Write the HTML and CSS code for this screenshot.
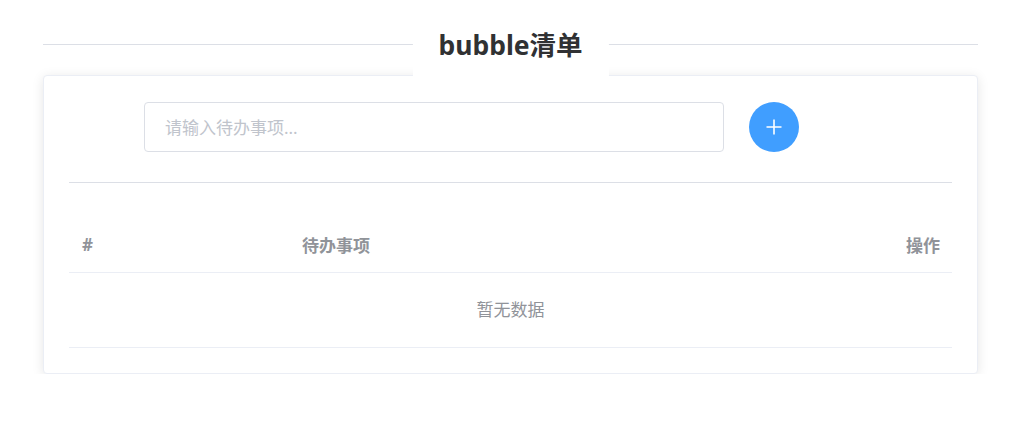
FILE: index.html
```
<!DOCTYPE html>
<html lang="zh-CN">
<head>
  <meta charset="UTF-8" />
  <meta name="viewport" content="width=device-width, initial-scale=1.0" />
  <title>bubble清单</title>
  <link rel="stylesheet" href="styles.css">
</head>
<body>
  <div class="page">
    <div class="header">
      <h1 class="title">bubble清单</h1>
    </div>

    <div class="card">
      <div class="add-row">
        <input type="text" class="todo-input" placeholder="请输入待办事项..." />
        <button class="add-btn" aria-label="add">
          <svg width="18" height="18" viewBox="0 0 18 18">
            <path d="M9 1.5v15M1.5 9h15" stroke="#fff" stroke-width="1.6" fill="none" />
          </svg>
        </button>
      </div>

      <div class="divider"></div>

      <div class="table">
        <div class="thead">
          <div class="cell">#</div>
          <div class="cell">待办事项</div>
          <div class="cell right">操作</div>
        </div>
        <div class="empty">暂无数据</div>
      </div>
    </div>
  </div>
</body>
</html>
```

FILE: styles.css
```
* {
  box-sizing: border-box;
}
body {
  margin: 0;
  background-color: #fff;
  font-family: "Noto Sans", "Noto Sans CJK SC", sans-serif;
  color: #303133;
}
.page {
  width: 935px;
  margin: 0 44px 0 43px;
  padding-top: 17px;
}
.header {
  position: relative;
  height: 58px;
  z-index: 1;
}
.header::before {
  content: "";
  position: absolute;
  left: 0;
  right: 0;
  top: 27px;
  border-top: 1px solid #dcdfe6;
}
.title {
  position: absolute;
  top: 0;
  left: 50%;
  transform: translateX(-50%);
  margin: 0;
  height: 62px;
  line-height: 56px;
  padding: 0 26px;
  background-color: #fff;
  font-size: 26.5px;
  font-weight: bold;
  color: #303133;
  white-space: nowrap;
}
.card {
  border: 1px solid #ebeef5;
  border-radius: 4px;
  background-color: #fff;
  box-shadow: 0 2px 12px 0 rgba(0, 0, 0, 0.1);
  padding: 26px 25px 25px;
}
.add-row {
  display: flex;
  align-items: center;
  gap: 25px;
  padding-left: 75px;
}
.todo-input {
  width: 580px;
  height: 50px;
  border: 1px solid #dcdfe6;
  border-radius: 4px;
  padding: 0 20px;
  font-size: 17px;
  font-family: inherit;
  color: #606266;
  outline: none;
}
.todo-input::placeholder {
  color: #c0c4cc;
}
.add-btn {
  width: 50px;
  height: 50px;
  border: none;
  border-radius: 50%;
  background-color: #409eff;
  display: flex;
  align-items: center;
  justify-content: center;
  cursor: pointer;
  padding: 0;
}
.divider {
  margin-top: 30px;
  border-top: 1px solid #dcdfe6;
}
.table {
  margin-top: 34px;
}
.thead {
  display: grid;
  grid-template-columns: 220px 1fr auto;
  height: 56px;
  align-items: center;
  padding: 0 12px 0 13px;
  border-bottom: 1px solid #ebeef5;
  color: #909399;
  font-weight: bold;
  font-size: 17px;
}
.right {
  text-align: right;
}
.empty {
  height: 75px;
  line-height: 74px;
  text-align: center;
  color: #909399;
  font-size: 17px;
  border-bottom: 1px solid #ebeef5;
}
```
